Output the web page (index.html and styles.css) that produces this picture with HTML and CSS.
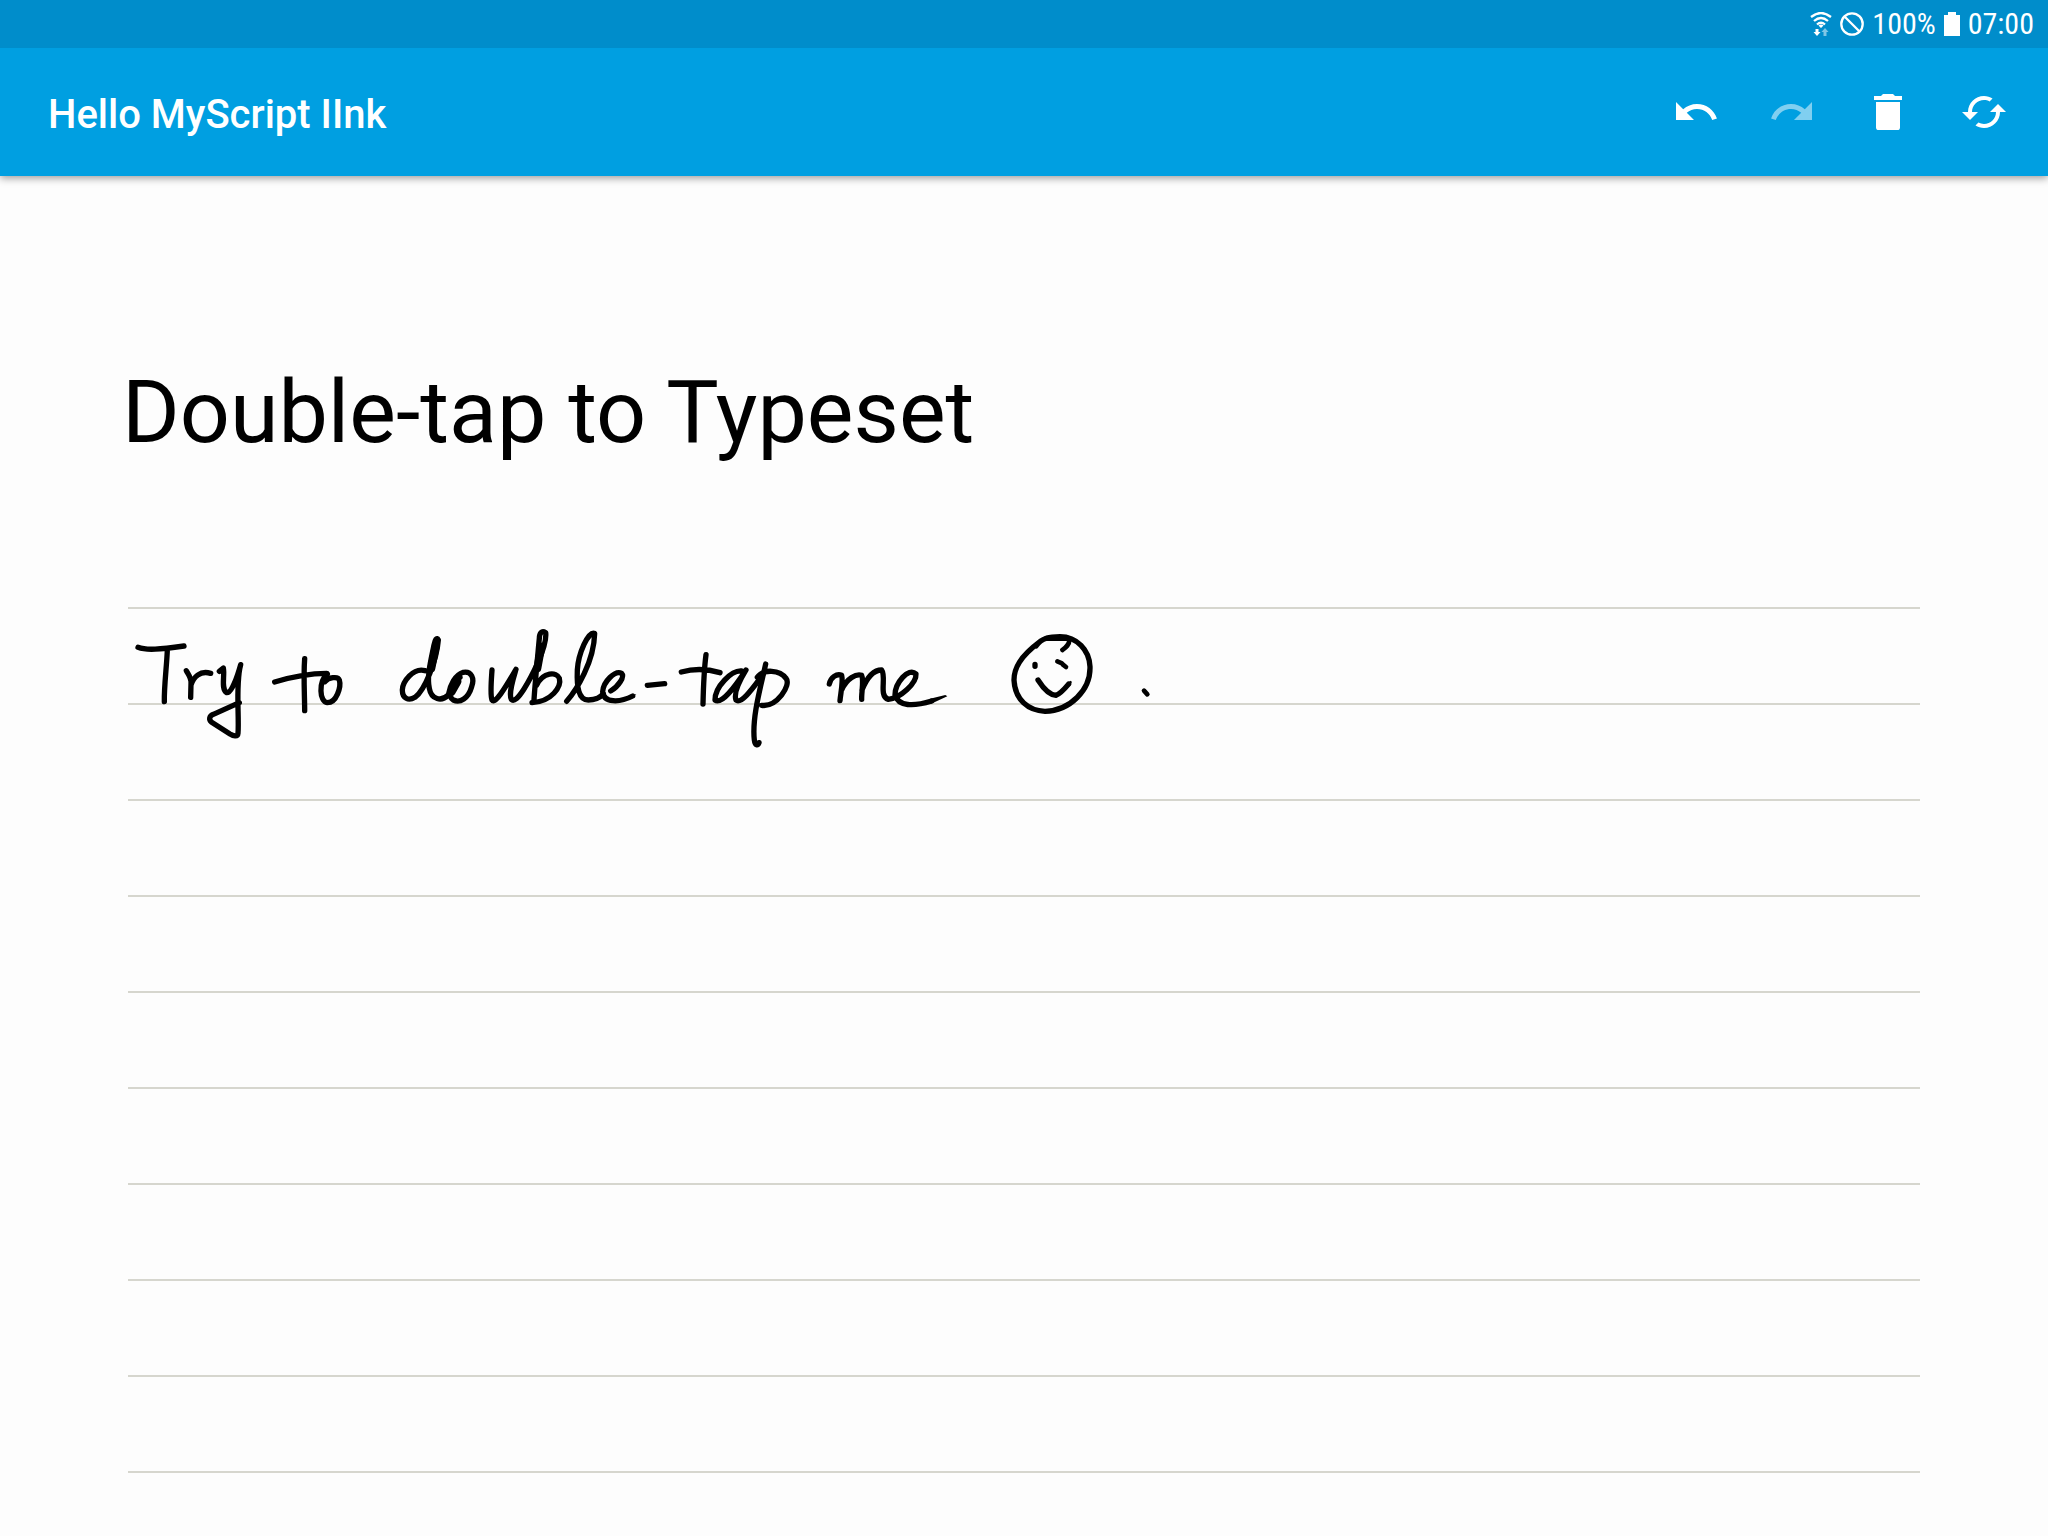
FILE: index.html
```html
<!DOCTYPE html>
<html lang="en">
<head>
<meta charset="utf-8">
<meta name="viewport" content="width=device-width, initial-scale=1">
<title>Hello MyScript IInk</title>
<link rel="stylesheet" href="styles.css">
</head>
<body>
<div class="status-bar">
  <svg class="status-wifi" viewBox="0 0 22 24" aria-hidden="true">
    <g fill="none" stroke="#fff" stroke-width="2.300">
      <path d="M1 5Q11-3 21 5"/>
      <path d="M4 9Q11 3 18 9"/>
      <path d="M7 12.500Q11 9 15 12.500"/>
    </g>
    <path fill="#fff" d="M8.500 13.500Q11 11.500 13.500 13.500L11 16zM5.500 17h3v3h2L7 24l-3.500-4h2z"/>
    <path fill="#fff" opacity=".5" d="M13.500 24v-4h-2l3.500-4 3.500 4h-2v4z"/>
  </svg>
  <svg class="status-blocked" viewBox="0 0 24 24" aria-hidden="true">
    <g fill="none" stroke="#fff" stroke-width="2.300"><circle cx="12" cy="12" r="10.700"/><path d="M4.500 4.500l15 15"/></g>
  </svg>
  <span class="status-level">100%</span>
  <svg class="status-battery" viewBox="0 0 16 24" aria-hidden="true">
    <path fill="#fff" d="M4 0h8v3h4v21H0V3h4z"/>
  </svg>
  <span class="status-clock">07:00</span>
</div>
<header class="toolbar">
  <div class="toolbar-title">Hello MyScript IInk</div>
  <div class="toolbar-actions">
    <button class="action" type="button" aria-label="Undo">
      <svg viewBox="0 0 24 24" aria-hidden="true"><path d="M12.500 8c-2.650 0-5.050.99-6.900 2.600L2 7v9h9l-3.620-3.620c1.390-1.160 3.160-1.880 5.120-1.880 3.540 0 6.550 2.310 7.600 5.500l2.370-.78C21.080 11.030 17.150 8 12.500 8z"/></svg>
    </button>
    <button class="action" type="button" aria-label="Redo" disabled>
      <svg viewBox="0 0 24 24" aria-hidden="true"><path d="M18.400 10.600C16.550 8.990 14.150 8 11.500 8c-4.650 0-8.580 3.030-9.960 7.220L3.900 16c1.050-3.190 4.050-5.500 7.600-5.500 1.950 0 3.730.72 5.120 1.880L13 16h9V7l-3.600 3.600z"/></svg>
    </button>
    <button class="action" type="button" aria-label="Clear">
      <svg viewBox="0 0 24 24" aria-hidden="true"><path d="M6 19.700c0 .8.500 1.300 1.300 1.300h9.400c.8 0 1.300-.5 1.300-1.300V7H6v12.700zM19 4h-3.500l-1-1h-5l-1 1H5v2h14V4z"/></svg>
    </button>
    <button class="action" type="button" aria-label="Convert">
      <svg viewBox="0 0 24 24" aria-hidden="true"><path d="M19 8l-4 4h3c0 3.310-2.690 6-6 6-1.010 0-1.970-.25-2.800-.7l-1.460 1.460C8.970 19.540 10.430 20 12 20c4.420 0 8-3.580 8-8h3l-4-4zM6 12c0-3.310 2.690-6 6-6 1.010 0 1.970.25 2.800.7l1.460-1.460C15.030 4.460 13.570 4 12 4c-4.420 0-8 3.580-8 8H1l4 4 4-4H6z"/></svg>
    </button>
  </div>
</header>
<main class="page">
  <h1 class="page-title">Double-tap to Typeset</h1>
  <div class="ruled">
    <svg class="ink" viewBox="0 -3 3186 540" role="img" aria-label="Try to double-tap me, smiling face">
      <!-- Try to -->
      <g transform="translate(-54 -54)">
        <path d="M84 172C110 182 150 178 222 168M172 180C170 230 162 290 163 335"/>
        <path d="M229 242C236 255 245 265 243 280L242 322M243 285C250 262 270 240 302 250"/>
        <path d="M328 244L340 234C345 255 332 298 350 308C365 310 382 260 392 224C376 280 388 380 384 430C383 442 370 438 360 432L305 397C295 388 298 378 310 373L388 338"/>
        <path d="M494 276C540 262 600 250 650 250M584 206C580 260 584 320 584 362"/>
        <path d="M652 252C625 275 628 335 652 338C680 338 694 290 688 270C684 258 655 262 645 275"/>
      </g>
      <!-- double- -->
      <g transform="translate(726 -54)">
        <path d="M165 242C130 232 98 275 97 300C97 325 115 334 135 322C165 300 200 210 205 150C200 140 195 150 192 165C182 215 170 260 178 295C184 330 215 335 235 315C240 285 255 255 280 247C305 243 314 265 305 290C295 325 270 340 250 330C232 318 235 280 270 262"/>
        <path d="M198 165L184 235M262 275L245 305" class="heavy"/>
        <path d="M366 240C364 270 360 315 366 330C376 345 410 285 438 238C430 265 415 310 424 328C440 345 480 270 505 215C520 180 530 150 527 128C515 120 508 130 508 145C502 210 495 280 492 330"/>
        <path d="M514 170L502 235" class="heavy"/>
        <path d="M500 285C520 245 560 245 568 265C575 290 545 335 486 338"/>
        <path d="M590 334C620 300 672 215 674 130C655 122 625 190 622 240C620 290 625 330 655 330C680 330 690 322 700 312"/>
        <path d="M722 303C745 290 765 260 755 250C735 240 700 275 698 305C700 340 750 338 788 318"/>
        <path d="M786 325L799 313L780 315z" class="tip"/>
        <path d="M832 286L884 281"/>
      </g>
      <!-- tap me -->
      <g transform="translate(1596 -54)">
        <path d="M64 246C100 236 140 236 180 248M138 194C132 240 130 300 129 342"/>
        <path d="M245 243C215 240 165 290 165 330C185 345 225 290 258 240C240 270 220 310 228 330C245 345 285 285 308 255"/>
        <path d="M317 222C305 280 275 380 283 450C285 468 294 468 297 458M292 262C310 235 360 240 378 265C395 285 350 352 305 346"/>
        <path d="M508 282C512 262 530 250 545 256C550 275 542 310 540 332M545 300C560 265 590 250 605 256C612 270 604 310 605 328M606 300C620 265 640 240 665 240C680 260 655 320 685 328C720 325 770 280 768 252C745 230 705 280 705 315C715 350 760 350 815 333"/>
        <path d="M812 342L862 319L856 315L810 326z" class="tip"/>
      </g>
      <!-- smiling face and full stop -->
      <g transform="translate(2496 -54)">
        <path d="M240 155C180 200 162 235 162 270C165 330 205 362 255 364C330 362 392 300 390 230C388 180 350 140 300 140C270 140 245 144 228 168"/>
        <path d="M260 145L325 145M225 223V229"/>
        <path d="M328 150C328 165 318 172 307 180M292 214L306 220M318 231L308 223" class="fine"/>
        <path d="M234 270C250 295 270 315 288 316C303 310 316 294 326 282"/>
        <path d="M320 280L332 272L336 276L328 289z" class="tip"/>
        <path d="M552 302L562 313" class="fine"/>
      </g>
    </svg>
  </div>
</main>
</body>
</html>
```
FILE: styles.css
```css
* {
  box-sizing: border-box;
}

body {
  margin: 0;
  min-height: 100vh;
  display: flex;
  flex-direction: column;
  background: #fdfdfd;
  color: #000;
  font-family: Roboto, "Noto Sans", sans-serif;
}

.status-bar {
  position: relative;
  z-index: 1;
  height: 48px;
  padding: 0 14px;
  display: flex;
  align-items: center;
  justify-content: flex-end;
  gap: 8px;
  background: #008dcb;
  color: #fff;
  font-family: "Roboto Condensed", Roboto, sans-serif;
  font-size: 30px;
  line-height: 48px;
}

.status-bar svg {
  display: block;
  height: 24px;
}

.status-wifi {
  width: 22px;
}

.status-blocked {
  width: 24px;
}

.status-battery {
  width: 16px;
}

.toolbar {
  position: relative;
  height: 128px;
  padding: 0 16px 0 48px;
  display: flex;
  align-items: center;
  justify-content: space-between;
  background: #009fe1;
  color: #fff;
  box-shadow: 0 2px 8px rgba(0, 0, 0, 0.4);
}

.toolbar-title {
  padding-top: 6px;
  font-size: 40px;
  font-weight: 500;
  line-height: 48px;
}

.toolbar-actions {
  display: flex;
}

.action {
  width: 96px;
  height: 96px;
  padding: 24px;
  border: 0;
  background: none;
  color: inherit;
}

.action svg {
  display: block;
  width: 48px;
  height: 48px;
  fill: currentColor;
}

.action:disabled {
  opacity: 0.5;
}

.page {
  flex: 1;
  display: flex;
  flex-direction: column;
  padding: 184px 128px 0 122px;
}

.page-title {
  margin: 0;
  font-size: 88px;
  font-weight: 400;
  line-height: 104px;
}

.ruled {
  flex: 1;
  margin: 143px 0 0 6px;
  background: repeating-linear-gradient(#d6d6ce 0 2px, transparent 2px 96px);
}

.ink {
  display: block;
  width: 1062px;
  height: 180px;
  overflow: visible;
  fill: none;
  stroke: #000;
  stroke-width: 16;
  stroke-linecap: round;
  stroke-linejoin: round;
}

.ink .heavy {
  stroke-width: 24;
}

.ink .fine {
  stroke-width: 14;
}

.ink .tip {
  fill: #000;
  stroke: none;
}
```
